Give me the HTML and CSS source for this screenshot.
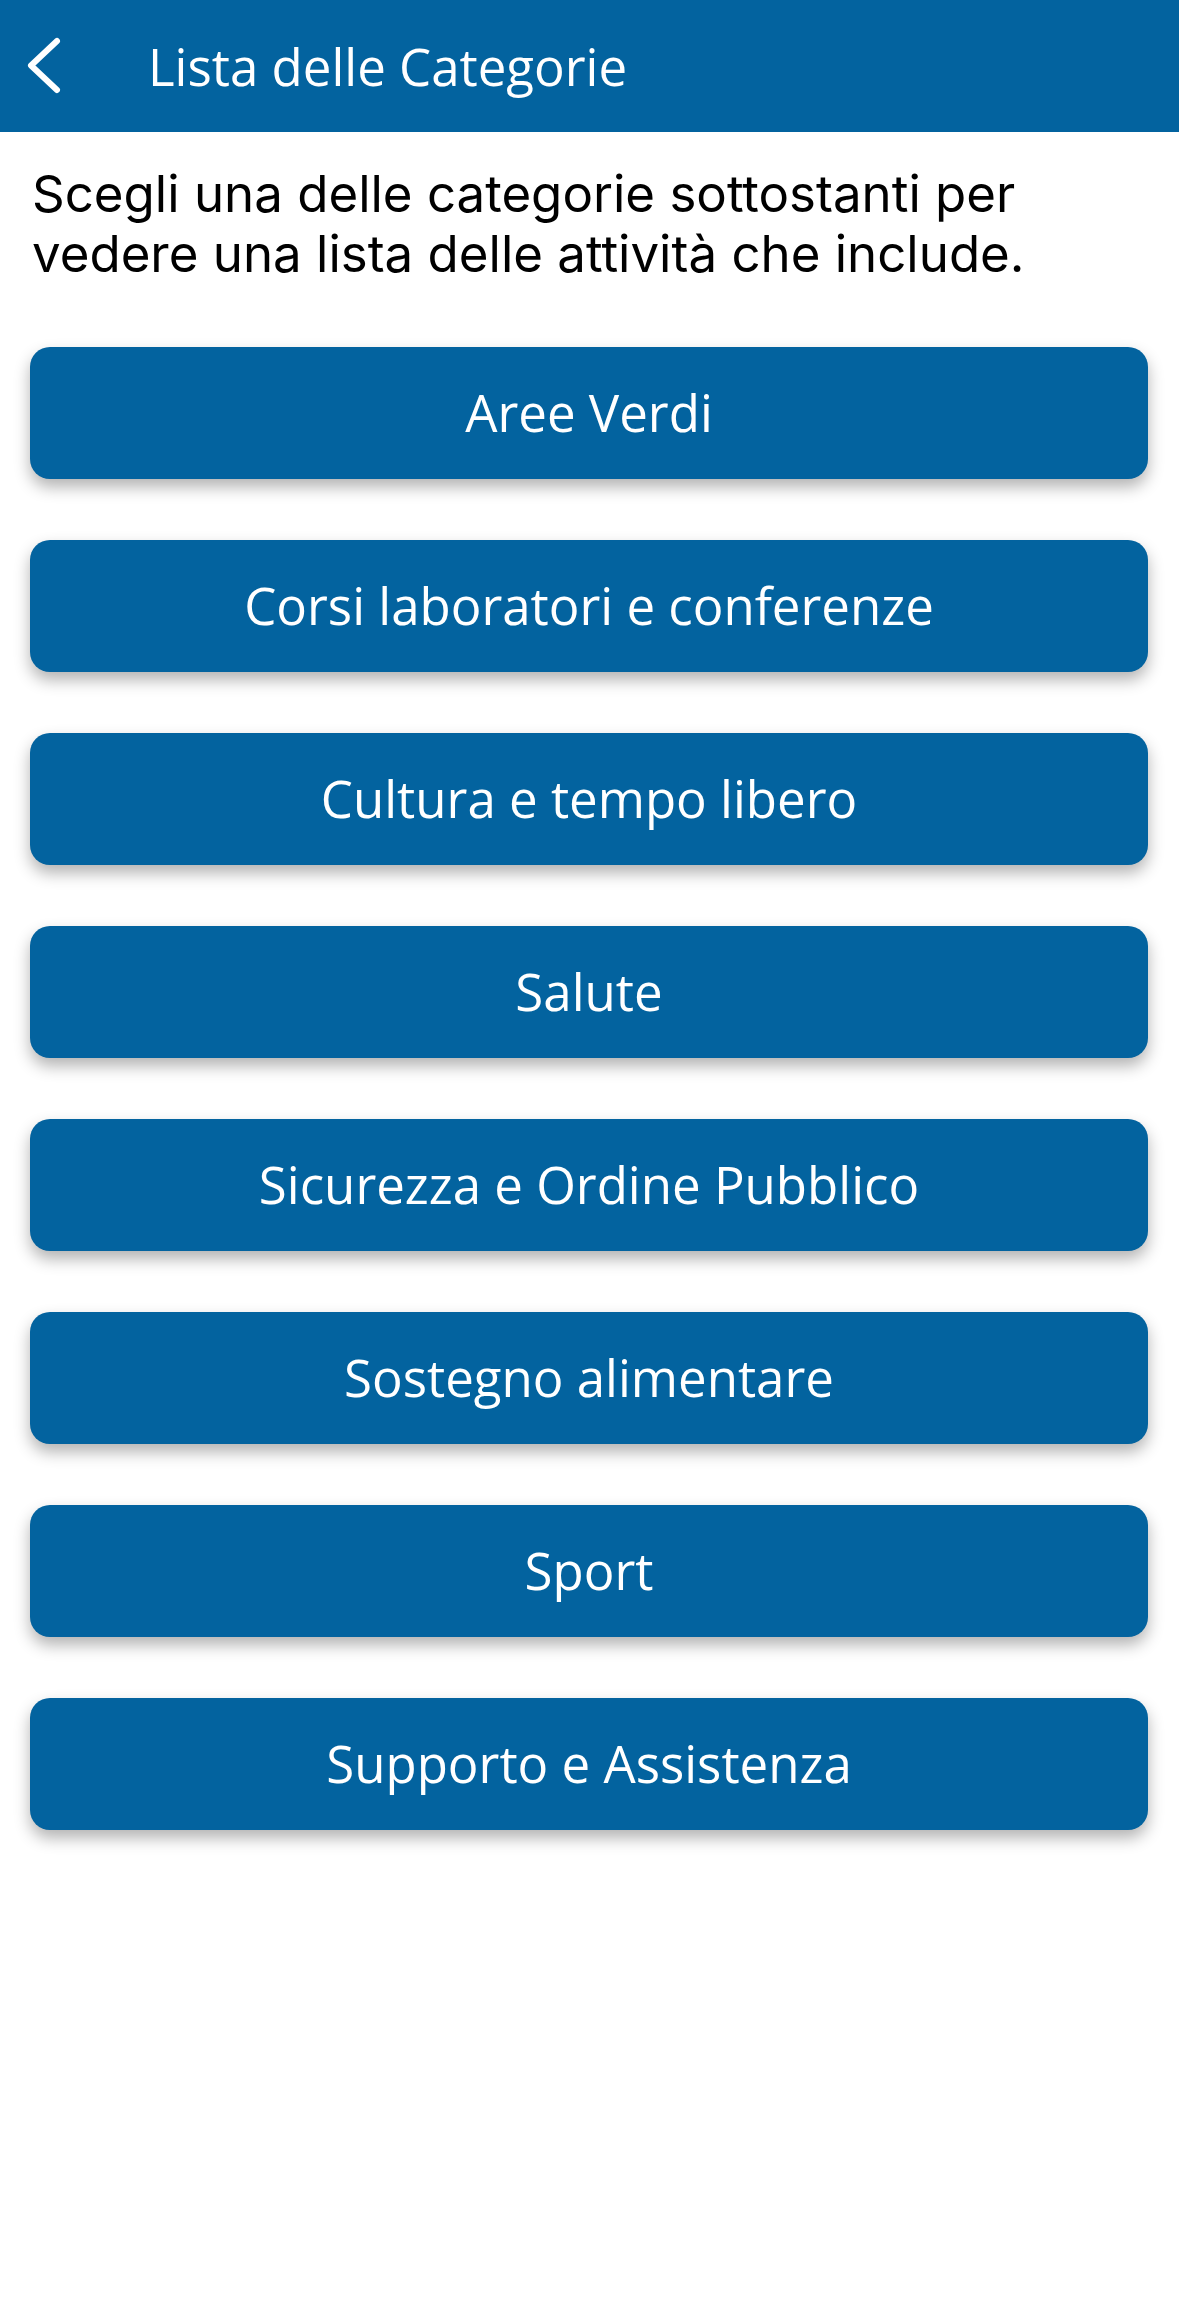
FILE: index.html
```html
<!DOCTYPE html>
<html lang="it">
<head>
<meta charset="utf-8">
<title>Lista delle Categorie</title>
<link rel="stylesheet" href="styles.css">
</head>
<body>
<header class="topbar">
  <svg class="back" width="44" height="60" viewBox="0 0 44 60" aria-hidden="true">
    <path d="M35 5 L9 29.5 L35 54" fill="none" stroke="#ffffff" stroke-width="6" stroke-linecap="round" stroke-linejoin="round"/>
  </svg>
  <h1 class="title">Lista delle Categorie</h1>
</header>
<main class="content">
  <p class="intro">Scegli una delle categorie sottostanti per vedere una lista delle attività che include.</p>
  <div class="list">
    <button class="cat">Aree Verdi</button>
    <button class="cat">Corsi laboratori e conferenze</button>
    <button class="cat">Cultura e tempo libero</button>
    <button class="cat">Salute</button>
    <button class="cat">Sicurezza e Ordine Pubblico</button>
    <button class="cat">Sostegno alimentare</button>
    <button class="cat">Sport</button>
    <button class="cat">Supporto e Assistenza</button>
  </div>
</main>
</body>
</html>
```

FILE: styles.css
```css
html, body {
  margin: 0;
  padding: 0;
  background: #ffffff;
}

body {
  width: 1179px;
  min-height: 2307px;
  font-family: "Open Sans", "Noto Sans", sans-serif;
}

.topbar {
  height: 132px;
  background: #03639f;
  display: flex;
  align-items: center;
}

.back {
  margin-left: 22px;
  flex: none;
}

.title {
  margin: 0 0 0 82px;
  font-family: "Open Sans", sans-serif;
  font-weight: 400;
  font-size: 51px;
  line-height: 68px;
  color: #ffffff;
}

.content {
  padding: 0 31px 0 30px;
}

.intro {
  margin: 32px 0 0 2px;
  font-family: Inter, "Liberation Sans", sans-serif;
  font-size: 51px;
  line-height: 60px;
  color: #000000;
  font-weight: 400;
}

.list {
  margin-top: 63px;
  display: flex;
  flex-direction: column;
  gap: 61px;
}

.cat {
  height: 132px;
  border: none;
  border-radius: 20px;
  background: #03639f;
  color: #ffffff;
  font-family: "Open Sans", sans-serif;
  font-size: 51px;
  font-weight: 400;
  display: flex;
  align-items: center;
  justify-content: center;
  padding: 0 0 3px 0;
  box-shadow: 0 8px 16px rgba(0, 0, 0, 0.3);
  cursor: pointer;
}
```
